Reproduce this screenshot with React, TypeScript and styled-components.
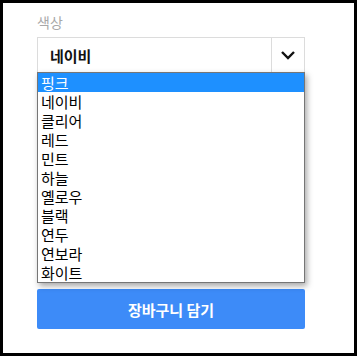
import React from "react";
import styled, { createGlobalStyle } from "styled-components";

const Global = createGlobalStyle`
  html, body { margin: 0; padding: 0; background: #000; }
  body { font-family: "Noto Sans CJK KR", "Noto Sans", sans-serif; }
`;

const Frame = styled.div`
  width: 357px;
  height: 356px;
  box-sizing: border-box;
  border: 3px solid #000;
  background: #fff;
  padding: 9px 50px 0 34px;
  display: flex;
  flex-direction: column;
`;

const Label = styled.div`
  font-size: 14px;
  line-height: 20px;
  color: #a8a8a8;
  height: 25px;
`;

const Field = styled.div`
  position: relative;
  width: 268px;
`;

const SelectBox = styled.div`
  height: 36px;
  box-sizing: border-box;
  border: 1px solid #dcdcdc;
  display: flex;
  align-items: stretch;
`;

const Value = styled.div`
  flex: 1;
  display: flex;
  align-items: center;
  padding-left: 12px;
  font-size: 15px;
  font-weight: 700;
  color: #111;
`;

const Arrow = styled.div`
  width: 32px;
  border-left: 1px solid #dcdcdc;
  display: flex;
  align-items: center;
  justify-content: center;
`;

const List = styled.ul`
  position: absolute;
  left: 0;
  top: 35px;
  width: 268px;
  box-sizing: border-box;
  margin: 0;
  padding: 0;
  list-style: none;
  border: 1px solid #767676;
  background: #fff;
  box-shadow: 2px 3px 6px rgba(0, 0, 0, 0.35);
  z-index: 2;
`;

const Item = styled.li<{ $active?: boolean }>`
  height: 19px;
  line-height: 19px;
  padding-left: 3px;
  font-size: 15px;
  color: ${(p) => (p.$active ? "#fff" : "#000")};
  background: ${(p) => (p.$active ? "#1e90ff" : "transparent")};
`;

const Button = styled.button`
  margin-top: 216px;
  width: 268px;
  height: 40px;
  border: none;
  border-radius: 2px;
  background: #3d8bf8;
  color: #fff;
  font-family: inherit;
  font-size: 15px;
  font-weight: 700;
  padding: 0;
`;

const items = ["핑크", "네이비", "클리어", "레드", "민트", "하늘", "옐로우", "블랙", "연두", "연보라", "화이트"];

export default function App() {
  return (
    <>
      <Global />
      <Frame>
        <Label>색상</Label>
        <Field>
          <SelectBox>
            <Value>네이비</Value>
            <Arrow>
              <svg width="16" height="10" viewBox="0 0 16 10">
                <path d="M2 2 L8 8 L14 2" fill="none" stroke="#111" strokeWidth="2.4" />
              </svg>
            </Arrow>
          </SelectBox>
          <List>
            {items.map((t, i) => (
              <Item key={t} $active={i === 0}>{t}</Item>
            ))}
          </List>
        </Field>
        <Button>장바구니 담기</Button>
      </Frame>
    </>
  );
}
